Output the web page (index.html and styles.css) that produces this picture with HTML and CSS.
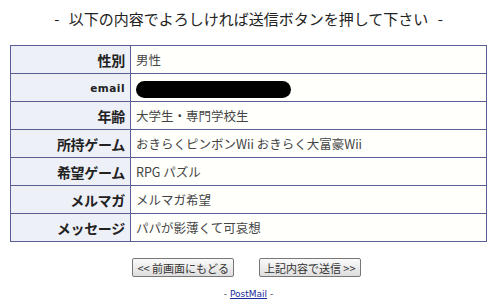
FILE: index.html
```html
<!DOCTYPE html>
<html lang="ja">
<head>
    <meta charset="UTF-8">
    <title>確認画面</title>
    <link rel="stylesheet" href="styles.css">
</head>
<body>
    <div class="page">
        <p class="msg">- 以下の内容でよろしければ送信ボタンを押して下さい -</p>

        <table class="confirm">
            <tr><th>性別</th><td>男性</td></tr>
            <tr><th class="latin">email</th><td><span class="redact"></span></td></tr>
            <tr><th>年齢</th><td>大学生・専門学校生</td></tr>
            <tr><th>所持ゲーム</th><td>おきらくピンボンWii おきらく大富豪Wii</td></tr>
            <tr><th>希望ゲーム</th><td>RPG パズル</td></tr>
            <tr><th>メルマガ</th><td>メルマガ希望</td></tr>
            <tr><th>メッセージ</th><td>パパが影薄くて可哀想</td></tr>
        </table>

        <div class="buttons">
            <button type="button">&lt;&lt; 前画面にもどる</button>
            <button type="button">上記内容で送信 &gt;&gt;</button>
        </div>

        <p class="footer">- <a href="#">PostMail</a> -</p>
    </div>
</body>
</html>
```

FILE: styles.css
```css
body {
    margin: 0;
    background: #fff;
    color: #333;
    font-family: "Noto Sans CJK JP", "Liberation Sans", sans-serif;
}

.page {
    padding: 7px 10px 0 10px;
    width: 477px;
}

.msg {
    margin: 0;
    text-align: center;
    font-size: 15px;
    line-height: 24px;
    color: #222;
    word-spacing: 6px;
}

.confirm {
    margin-top: 14px;
    width: 477px;
    border-collapse: collapse;
    border: 1px solid #4b4f86;
}

.confirm th,
.confirm td {
    border: 1px solid #5a5e94;
    height: 27px;
    padding: 0 5px;
    font-size: 12.5px;
}

.confirm th {
    width: 109px;
    text-align: right;
    background: #eef0f8;
    color: #222;
    font-weight: bold;
    font-size: 14px;
    letter-spacing: -0.3px;
}

.confirm th.latin {
    font-family: "DejaVu Sans", Verdana, sans-serif;
    font-size: 10.5px;
    letter-spacing: 0.5px;
}

.confirm td {
    background: #fffffc;
    color: #444;
}

.redact {
    display: inline-block;
    vertical-align: middle;
    width: 155px;
    height: 17px;
    border-radius: 9px;
    background: #000;
}

.buttons {
    display: flex;
    justify-content: center;
    gap: 25px;
    margin-top: 16px;
    padding-right: 4px;
}

.buttons button {
    font-family: "Noto Sans CJK JP", sans-serif;
    font-size: 11px;
    line-height: 14px;
    height: 19px;
    padding: 0 4px;
    color: #333;
    border: 1px solid #777;
    border-radius: 2px;
    background: linear-gradient(#fafafa, #dedede);
}

.footer {
    margin: 12px 0 0 0;
    text-align: center;
    font-family: "DejaVu Sans", Verdana, sans-serif;
    font-size: 9px;
    color: #444;
}

.footer a {
    color: #1a2a9a;
}
```
